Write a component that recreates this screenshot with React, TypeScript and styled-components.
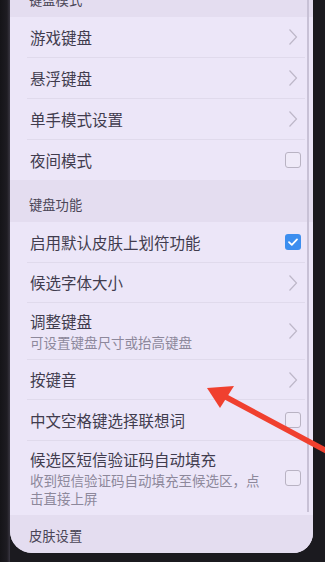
import React from 'react';
import styled, { createGlobalStyle } from 'styled-components';

type Control = 'chevron' | 'check' | 'checked';

type Item = {
  kind: 'item';
  title: string;
  subtitle?: string;
  control: Control;
  height: number;
  last?: boolean;
};

type Header = {
  kind: 'header';
  title: string;
  height: number;
  clipped?: boolean;
};

const entries: (Item | Header)[] = [
  { kind: 'header', title: '键盘模式', height: 17, clipped: true },
  { kind: 'item', title: '游戏键盘', control: 'chevron', height: 41 },
  { kind: 'item', title: '悬浮键盘', control: 'chevron', height: 41 },
  { kind: 'item', title: '单手模式设置', control: 'chevron', height: 41 },
  { kind: 'item', title: '夜间模式', control: 'check', height: 40, last: true },
  { kind: 'header', title: '键盘功能', height: 42 },
  { kind: 'item', title: '启用默认皮肤上划符功能', control: 'checked', height: 41 },
  { kind: 'item', title: '候选字体大小', control: 'chevron', height: 40 },
  {
    kind: 'item',
    title: '调整键盘',
    subtitle: '可设置键盘尺寸或抬高键盘',
    control: 'chevron',
    height: 57,
  },
  { kind: 'item', title: '按键音', control: 'chevron', height: 40 },
  { kind: 'item', title: '中文空格键选择联想词', control: 'check', height: 41 },
  {
    kind: 'item',
    title: '候选区短信验证码自动填充',
    subtitle: '收到短信验证码自动填充至候选区，点击直接上屏',
    control: 'check',
    height: 74,
    last: true,
  },
  { kind: 'header', title: '皮肤设置', height: 38 },
];

const GlobalStyle = createGlobalStyle`
  html, body {
    margin: 0;
    padding: 0;
    background: #1b1a1f;
    overflow: hidden;
  }
  body {
    font-family: "Noto Sans CJK SC", "Noto Sans", sans-serif;
  }
`;

const Chevron = () => (
  <svg width="10" height="18" viewBox="0 0 10 18">
    <path d="M1.5 1.5 L8.5 9 L1.5 16.5" fill="none" stroke="#bdb7c8" strokeWidth="1.2" />
  </svg>
);

const Tick = () => (
  <svg width="12" height="10" viewBox="0 0 12 10">
    <path
      d="M2 5.2 L4.8 7.8 L10 2.4"
      fill="none"
      stroke="#ffffff"
      strokeWidth="1.8"
      strokeLinecap="round"
      strokeLinejoin="round"
    />
  </svg>
);

const App: React.FC = () => {
  return (
    <>
      <GlobalStyle />
      <Phone>
        <LeftBezel />
        <Screen>
          {entries.map((entry, i) =>
            entry.kind === 'header' ? (
              <SectionHeader key={i} $height={entry.height} $clipped={entry.clipped}>
                <HeaderLabel $clipped={entry.clipped}>{entry.title}</HeaderLabel>
              </SectionHeader>
            ) : (
              <Row key={i} $height={entry.height}>
                <RowInner $last={entry.last}>
                  <Texts>
                    <Title>{entry.title}</Title>
                    {entry.subtitle && <Subtitle>{entry.subtitle}</Subtitle>}
                  </Texts>
                  <ControlSlot>
                    {entry.control === 'chevron' && <Chevron />}
                    {entry.control === 'check' && <CheckBox />}
                    {entry.control === 'checked' && (
                      <CheckBox $checked>
                        <Tick />
                      </CheckBox>
                    )}
                  </ControlSlot>
                </RowInner>
              </Row>
            )
          )}
          <ScrollBar />
        </Screen>
      </Phone>
      {/* red pointer drawn over the photo */}
      <Arrow width="325" height="562" viewBox="0 0 325 562">
        <path d="M332 454 L224 396" stroke="#f0402f" strokeWidth="5.5" strokeLinecap="round" />
        <polygon points="207,388 234,386 220,408" fill="#f0402f" />
      </Arrow>
    </>
  );
};

const Phone = styled.div`
  display: flex;
  width: 325px;
  height: 562px;
  background: #1b1a1f;
`;

const LeftBezel = styled.div`
  width: 10px;
  flex-shrink: 0;
  background: linear-gradient(90deg, #151418 0, #1e1c22 7px, #3a3742 10px);
`;

const Screen = styled.div`
  position: relative;
  width: 303px;
  height: 553px;
  display: flex;
  flex-direction: column;
  overflow: hidden;
  border-bottom-left-radius: 22px;
  border-bottom-right-radius: 20px;
  background: #e6dff1;
`;

const SectionHeader = styled.div<{ $height: number; $clipped?: boolean }>`
  flex-shrink: 0;
  height: ${(p) => p.$height}px;
  display: flex;
  align-items: ${(p) => (p.$clipped ? 'flex-start' : 'flex-end')};
  padding: ${(p) => (p.$clipped ? '0 0 0 19px' : '0 0 9px 19px')};
  box-sizing: border-box;
  overflow: hidden;
  background: #e4ddf0;
`;

// the first header is scrolled half out of view
const HeaderLabel = styled.span<{ $clipped?: boolean }>`
  margin-top: ${(p) => (p.$clipped ? '-9px' : '0')};
  color: #4a4556;
  font-size: 13.3px;
  line-height: 17px;
`;

const Row = styled.div<{ $height: number }>`
  flex-shrink: 0;
  height: ${(p) => p.$height}px;
  padding-left: 17px;
  padding-right: 8px;
  background: #ece6f8;
  box-sizing: border-box;
`;

const RowInner = styled.div<{ $last?: boolean }>`
  height: 100%;
  display: flex;
  align-items: center;
  border-bottom: ${(p) => (p.$last ? 'none' : '1px solid #e0daec')};
  box-sizing: border-box;
`;

const Texts = styled.div`
  flex: 1;
  display: flex;
  flex-direction: column;
  padding-left: 3px;
  padding-right: 14px;
`;

const Title = styled.div`
  font-size: 15.5px;
  line-height: 21px;
  color: #413c4e;
`;

const Subtitle = styled.div`
  margin-top: 1px;
  font-size: 13.5px;
  line-height: 18px;
  color: #8d889b;
`;

const ControlSlot = styled.div`
  width: 22px;
  flex-shrink: 0;
  display: flex;
  justify-content: center;
  align-items: center;
  margin-right: 1px;
`;

const CheckBox = styled.div<{ $checked?: boolean }>`
  width: 16px;
  height: 16px;
  box-sizing: border-box;
  border-radius: 3px;
  display: flex;
  align-items: center;
  justify-content: center;
  border: ${(p) => (p.$checked ? 'none' : '1.3px solid #b9b3c3')};
  background: ${(p) => (p.$checked ? '#3c8eef' : '#efeaf8')};
`;

const ScrollBar = styled.div`
  position: absolute;
  top: 0;
  right: 4px;
  width: 2px;
  height: 512px;
  background: #c8c1d6;
`;

const Arrow = styled.svg`
  position: absolute;
  top: 0;
  left: 0;
  pointer-events: none;
`;

export default App;
